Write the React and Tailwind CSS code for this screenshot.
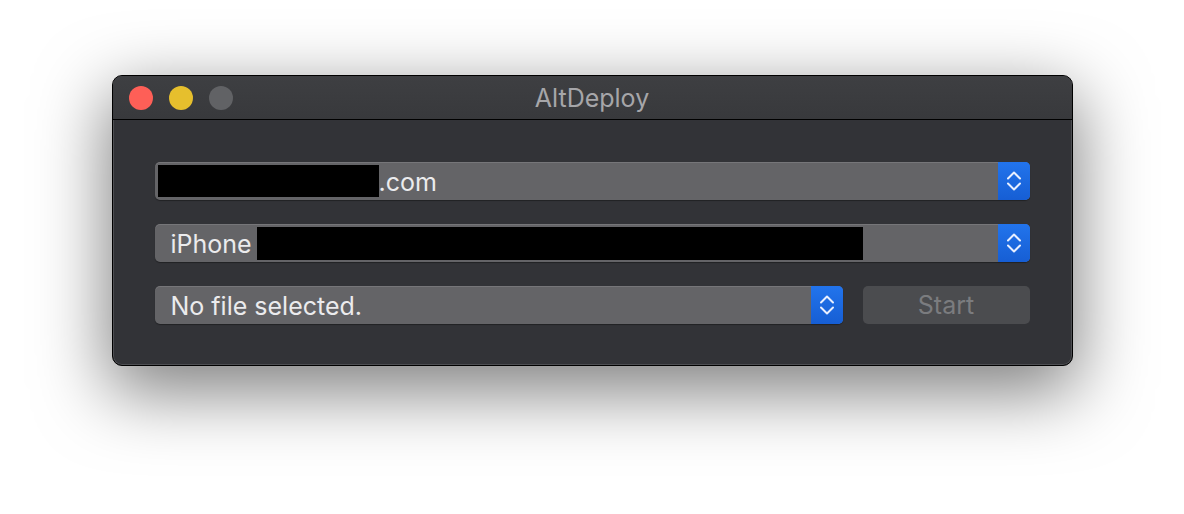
import React from "react";

function Chevrons() {
  return (
    <svg width="16" height="24" viewBox="0 0 16 24" fill="none">
      <path d="M2 9.5L8 3.5L14 9.5" stroke="#e8efff" strokeWidth="2" strokeLinecap="round" strokeLinejoin="round" />
      <path d="M2 14.5L8 20.5L14 14.5" stroke="#e8efff" strokeWidth="2" strokeLinecap="round" strokeLinejoin="round" />
    </svg>
  );
}

function Popup({ children, className = "" }) {
  return (
    <div className={"flex h-[38px] rounded-[5px] bg-[#646467] shadow-[inset_0_1px_0_rgba(255,255,255,0.12),0_1px_1px_rgba(0,0,0,0.35)] overflow-hidden " + className}>
      <div className="flex flex-1 items-center min-w-0">{children}</div>
      <div className="flex w-[32px] items-center justify-center bg-[#1b68df] bg-gradient-to-b from-[#2274ec] to-[#165ed4]">
        <Chevrons />
      </div>
    </div>
  );
}

export default function App() {
  return (
    <div className="min-h-[514px] w-full bg-white flex justify-center pt-[75px]" style={{ fontFamily: '"Inter", "Liberation Sans", sans-serif' }}>
      <div className="w-[961px] h-[291px] rounded-[10px] border border-black bg-[#323337] shadow-[0_22px_70px_4px_rgba(0,0,0,0.5)] overflow-hidden flex flex-col">
        <div className="h-full w-full rounded-[9px] shadow-[inset_0_0_0_1px_rgba(255,255,255,0.14)] flex flex-col">
          <div className="relative h-[44px] shrink-0 flex items-center bg-gradient-to-b from-[#3e3f42] to-[#38393c] border-b border-black">
            <div className="flex items-center gap-[16px] pl-[16px]">
              <div className="w-[24px] h-[24px] rounded-full bg-[#fe5f57]" />
              <div className="w-[24px] h-[24px] rounded-full bg-[#e6bf2d]" />
              <div className="w-[24px] h-[24px] rounded-full bg-[#616265]" />
            </div>
            <div className="absolute inset-0 flex items-center justify-center pt-[3px] text-[25px] text-[#a6a6a9]">
              AltDeploy
            </div>
          </div>
          <div className="flex flex-col gap-[24px] px-[42px] pt-[42px]">
            <Popup>
              <div className="ml-[3px] h-[32px] w-[221px] bg-black" />
              <span className="pt-[2px] text-[25px] text-[#ebebed] leading-none">.com</span>
            </Popup>
            <Popup>
              <span className="pl-[16px] pt-[2px] text-[25px] text-[#ebebed] leading-none">iPhone</span>
              <div className="ml-[5px] h-[33px] w-[606px] bg-black" />
            </Popup>
            <div className="flex gap-[20px]">
              <Popup className="w-[688px]">
                <span className="pl-[16px] pt-[2px] text-[25px] text-[#ebebed] leading-none">No file selected.</span>
              </Popup>
              <div className="flex h-[38px] flex-1 items-center justify-center rounded-[5px] bg-[#4b4c4f] pt-[2px] text-[25px] text-[#7b7c7f]">
                Start
              </div>
            </div>
          </div>
        </div>
      </div>
    </div>
  );
}
